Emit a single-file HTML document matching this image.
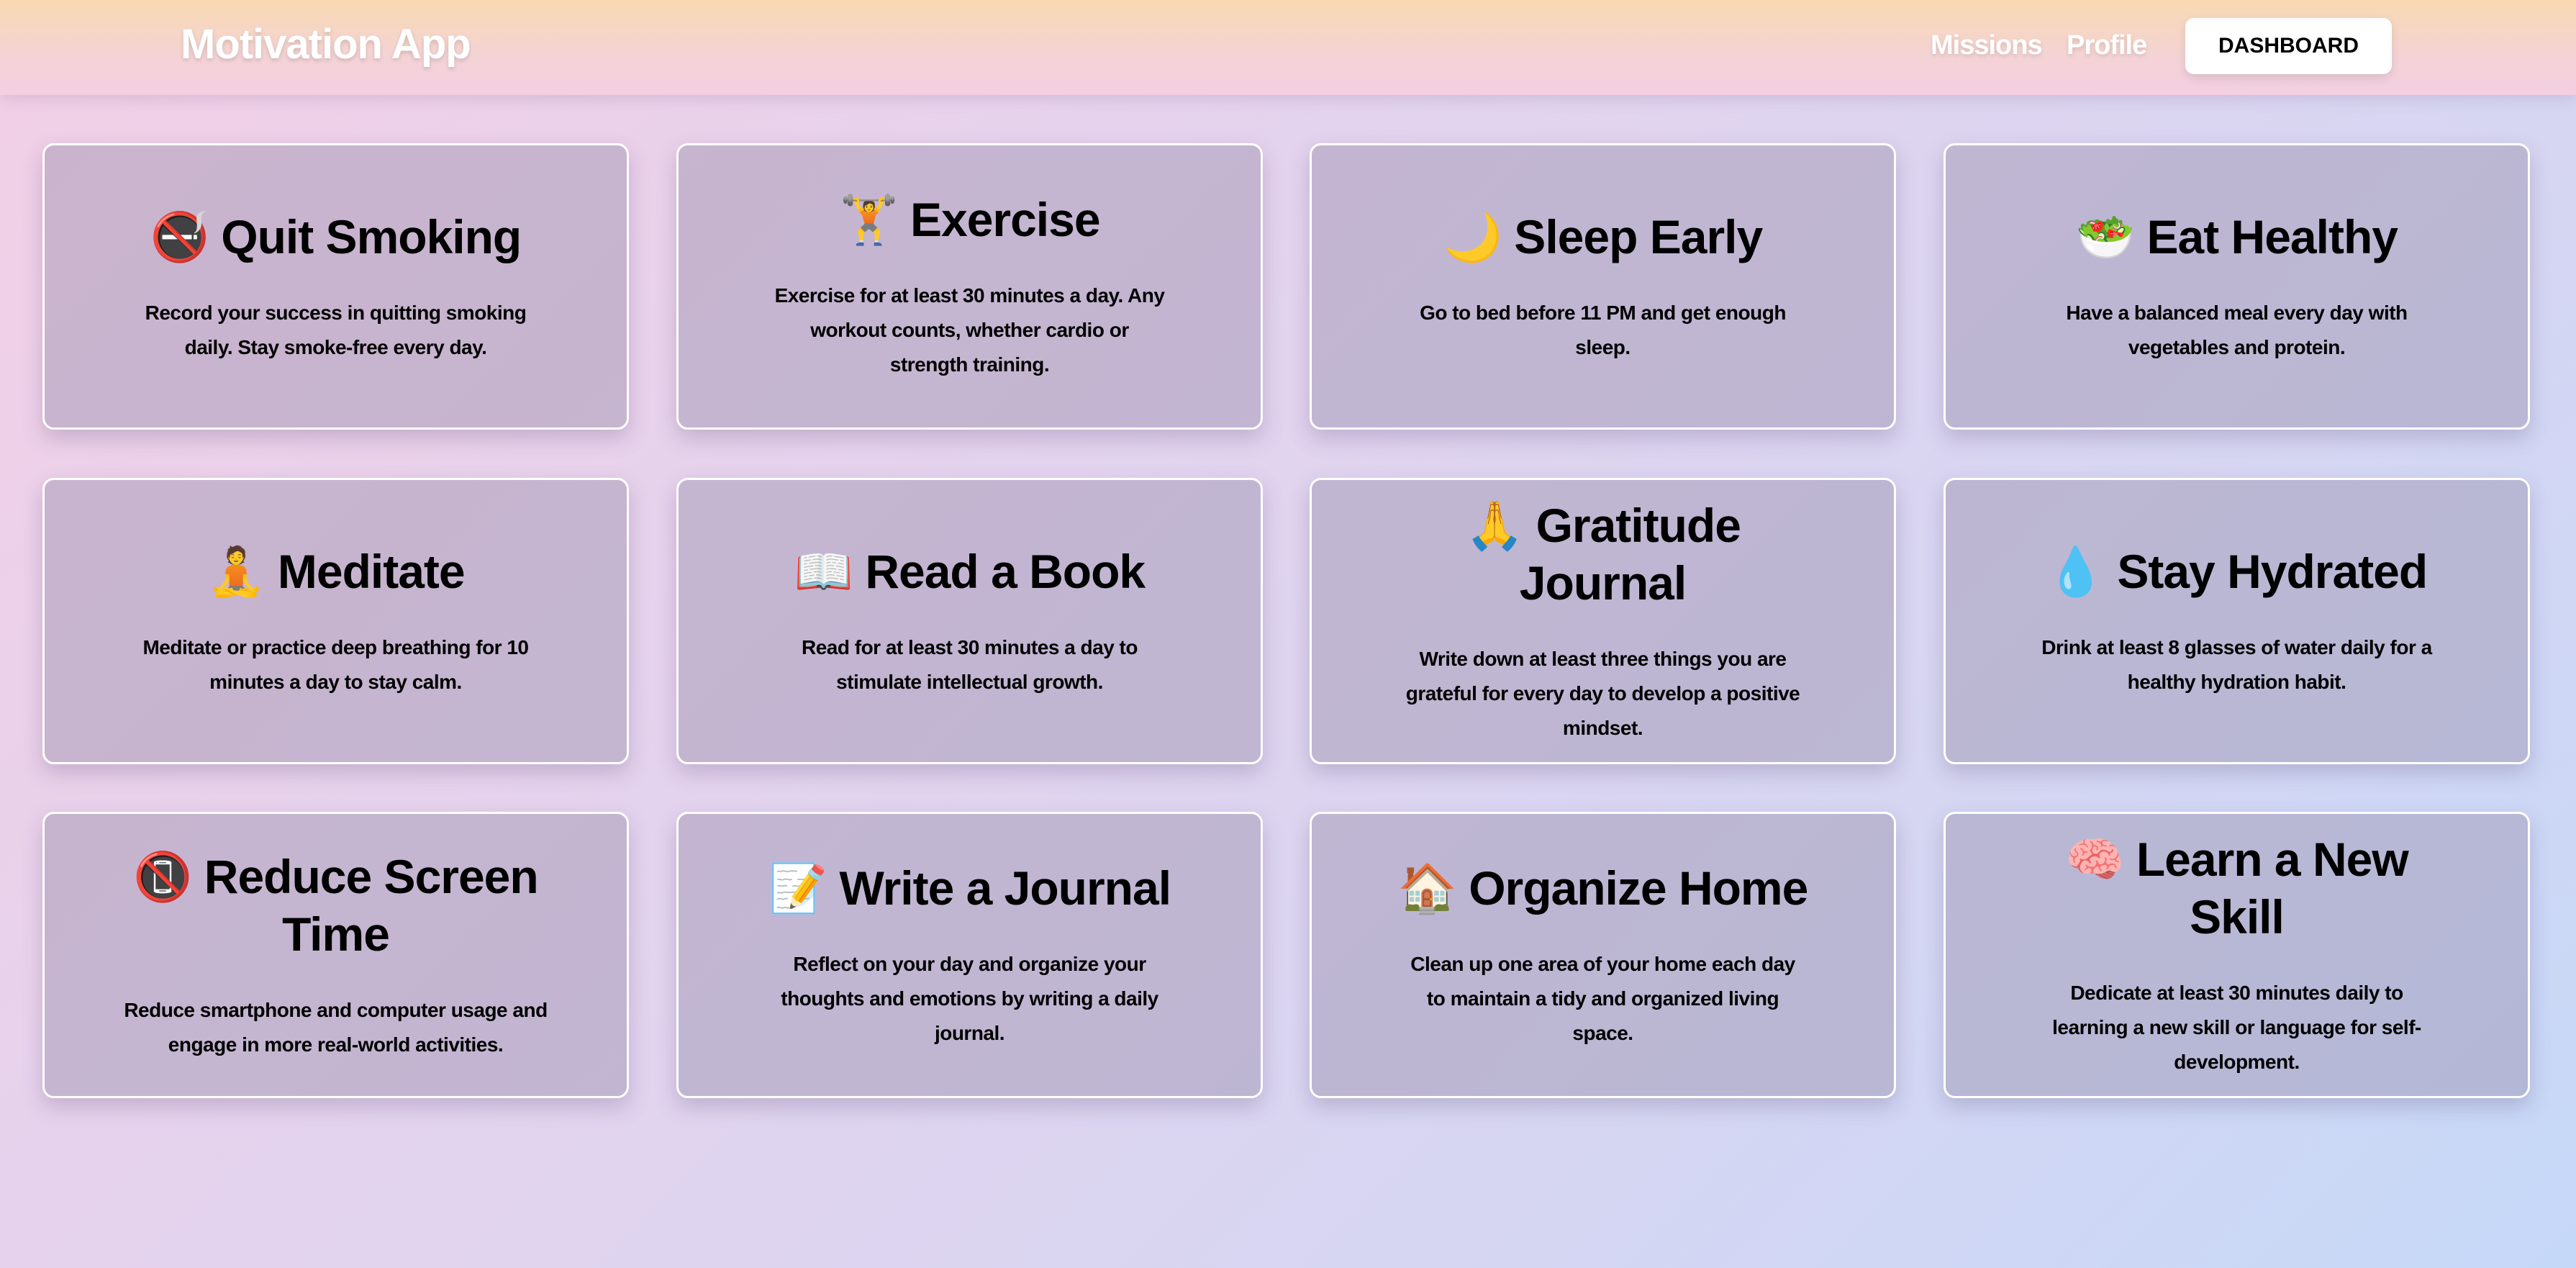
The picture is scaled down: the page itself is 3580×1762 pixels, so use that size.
<!DOCTYPE html>
<html><head><meta charset="utf-8"><style>
*{margin:0;padding:0;box-sizing:border-box}
html,body{width:3580px;height:1762px;overflow:hidden}
body{font-family:"Liberation Sans","DejaVu Sans",sans-serif;background:linear-gradient(135deg,#f2cfe6 0%,#e3d3ee 40%,#d6d6f2 70%,#c6d8f8 100%);position:relative}
header{position:absolute;left:0;top:0;width:3580px;height:132px;background:linear-gradient(180deg,#f8d9b1 0%,#f4d3d6 60%,#f3cfe2 100%);box-shadow:0 6px 18px rgba(120,90,130,.18)}
.logo{position:absolute;left:251px;top:28px;font-size:58px;font-weight:bold;color:#fff;letter-spacing:-1px;text-shadow:0 3px 6px rgba(0,0,0,.15)}
.nav{position:absolute;top:42px;font-size:38px;font-weight:bold;color:#fff;letter-spacing:-1px;text-shadow:0 3px 6px rgba(0,0,0,.12)}
.btn{position:absolute;left:3037px;top:25px;width:287px;height:78px;background:#fff;border-radius:12px;box-shadow:0 6px 14px rgba(0,0,0,.1);font-size:30px;font-weight:bold;color:#000;text-align:center;line-height:78px}
.card{position:absolute;width:815px;height:398px;border:3px solid #fff;border-radius:16px;background:rgba(150,140,170,.42);box-shadow:0 12px 28px rgba(90,70,120,.25);display:flex;flex-direction:column;justify-content:center;align-items:center;text-align:center;white-space:nowrap}
.card h2{font-size:66px;line-height:80px;font-weight:bold;color:#000;letter-spacing:-1px}
.card p{font-size:28px;line-height:48px;font-weight:bold;color:#000;margin-top:42px;letter-spacing:-.5px}
</style></head><body>
<header>
<div class="logo">Motivation App</div>
<div class="nav" style="left:2683px">Missions</div>
<div class="nav" style="left:2872px">Profile</div>
<div class="btn">DASHBOARD</div>
</header>

<div class="card" style="left:59px;top:199px"><h2>🚭 Quit Smoking</h2><p>Record your success in quitting smoking<br>daily. Stay smoke-free every day.</p></div>
<div class="card" style="left:940px;top:199px"><h2>🏋️ Exercise</h2><p>Exercise for at least 30 minutes a day. Any<br>workout counts, whether cardio or<br>strength training.</p></div>
<div class="card" style="left:1820px;top:199px"><h2>🌙 Sleep Early</h2><p>Go to bed before 11 PM and get enough<br>sleep.</p></div>
<div class="card" style="left:2701px;top:199px"><h2>🥗 Eat Healthy</h2><p>Have a balanced meal every day with<br>vegetables and protein.</p></div>

<div class="card" style="left:59px;top:664px"><h2>🧘 Meditate</h2><p>Meditate or practice deep breathing for 10<br>minutes a day to stay calm.</p></div>
<div class="card" style="left:940px;top:664px"><h2>📖 Read a Book</h2><p>Read for at least 30 minutes a day to<br>stimulate intellectual growth.</p></div>
<div class="card" style="left:1820px;top:664px"><h2>🙏 Gratitude<br>Journal</h2><p>Write down at least three things you are<br>grateful for every day to develop a positive<br>mindset.</p></div>
<div class="card" style="left:2701px;top:664px"><h2>💧 Stay Hydrated</h2><p>Drink at least 8 glasses of water daily for a<br>healthy hydration habit.</p></div>

<div class="card" style="left:59px;top:1128px"><h2>📵 Reduce Screen<br>Time</h2><p>Reduce smartphone and computer usage and<br>engage in more real-world activities.</p></div>
<div class="card" style="left:940px;top:1128px"><h2>📝 Write a Journal</h2><p>Reflect on your day and organize your<br>thoughts and emotions by writing a daily<br>journal.</p></div>
<div class="card" style="left:1820px;top:1128px"><h2>🏠 Organize Home</h2><p>Clean up one area of your home each day<br>to maintain a tidy and organized living<br>space.</p></div>
<div class="card" style="left:2701px;top:1128px"><h2>🧠 Learn a New<br>Skill</h2><p>Dedicate at least 30 minutes daily to<br>learning a new skill or language for self-<br>development.</p></div>
</body></html>
